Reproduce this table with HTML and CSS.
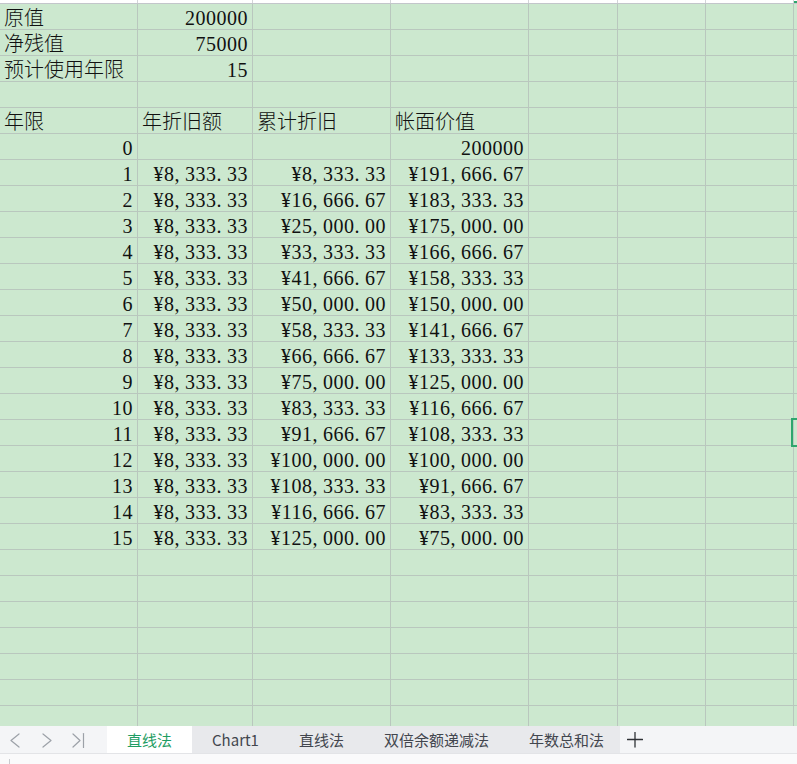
FILE: index.html
```html
<!DOCTYPE html>
<html lang="zh-CN">
<head>
<meta charset="utf-8">
<title>直线法</title>
<link rel="stylesheet" href="styles.css">
</head>
<body>
<div class="app">
  <div class="colhead"></div>
  <div class="sheet">
    <div class="row"><div class="c">原值</div><div class="c r">200000</div></div>
    <div class="row"><div class="c">净残值</div><div class="c r">75000</div></div>
    <div class="row"><div class="c">预计使用年限</div><div class="c r">15</div></div>
    <div class="row"></div>
    <div class="row"><div class="c">年限</div><div class="c">年折旧额</div><div class="c">累计折旧</div><div class="c">帐面价值</div></div>
    <div class="row"><div class="c r">0</div><div class="c"></div><div class="c"></div><div class="c r">200000</div></div>
    <div class="row"><div class="c r">1</div><div class="c r">¥8<i>,</i>333<i>.</i>33</div><div class="c r">¥8<i>,</i>333<i>.</i>33</div><div class="c r">¥191<i>,</i>666<i>.</i>67</div></div>
    <div class="row"><div class="c r">2</div><div class="c r">¥8<i>,</i>333<i>.</i>33</div><div class="c r">¥16<i>,</i>666<i>.</i>67</div><div class="c r">¥183<i>,</i>333<i>.</i>33</div></div>
    <div class="row"><div class="c r">3</div><div class="c r">¥8<i>,</i>333<i>.</i>33</div><div class="c r">¥25<i>,</i>000<i>.</i>00</div><div class="c r">¥175<i>,</i>000<i>.</i>00</div></div>
    <div class="row"><div class="c r">4</div><div class="c r">¥8<i>,</i>333<i>.</i>33</div><div class="c r">¥33<i>,</i>333<i>.</i>33</div><div class="c r">¥166<i>,</i>666<i>.</i>67</div></div>
    <div class="row"><div class="c r">5</div><div class="c r">¥8<i>,</i>333<i>.</i>33</div><div class="c r">¥41<i>,</i>666<i>.</i>67</div><div class="c r">¥158<i>,</i>333<i>.</i>33</div></div>
    <div class="row"><div class="c r">6</div><div class="c r">¥8<i>,</i>333<i>.</i>33</div><div class="c r">¥50<i>,</i>000<i>.</i>00</div><div class="c r">¥150<i>,</i>000<i>.</i>00</div></div>
    <div class="row"><div class="c r">7</div><div class="c r">¥8<i>,</i>333<i>.</i>33</div><div class="c r">¥58<i>,</i>333<i>.</i>33</div><div class="c r">¥141<i>,</i>666<i>.</i>67</div></div>
    <div class="row"><div class="c r">8</div><div class="c r">¥8<i>,</i>333<i>.</i>33</div><div class="c r">¥66<i>,</i>666<i>.</i>67</div><div class="c r">¥133<i>,</i>333<i>.</i>33</div></div>
    <div class="row"><div class="c r">9</div><div class="c r">¥8<i>,</i>333<i>.</i>33</div><div class="c r">¥75<i>,</i>000<i>.</i>00</div><div class="c r">¥125<i>,</i>000<i>.</i>00</div></div>
    <div class="row"><div class="c r">10</div><div class="c r">¥8<i>,</i>333<i>.</i>33</div><div class="c r">¥83<i>,</i>333<i>.</i>33</div><div class="c r">¥116<i>,</i>666<i>.</i>67</div></div>
    <div class="row"><div class="c r">11</div><div class="c r">¥8<i>,</i>333<i>.</i>33</div><div class="c r">¥91<i>,</i>666<i>.</i>67</div><div class="c r">¥108<i>,</i>333<i>.</i>33</div></div>
    <div class="row"><div class="c r">12</div><div class="c r">¥8<i>,</i>333<i>.</i>33</div><div class="c r">¥100<i>,</i>000<i>.</i>00</div><div class="c r">¥100<i>,</i>000<i>.</i>00</div></div>
    <div class="row"><div class="c r">13</div><div class="c r">¥8<i>,</i>333<i>.</i>33</div><div class="c r">¥108<i>,</i>333<i>.</i>33</div><div class="c r">¥91<i>,</i>666<i>.</i>67</div></div>
    <div class="row"><div class="c r">14</div><div class="c r">¥8<i>,</i>333<i>.</i>33</div><div class="c r">¥116<i>,</i>666<i>.</i>67</div><div class="c r">¥83<i>,</i>333<i>.</i>33</div></div>
    <div class="row"><div class="c r">15</div><div class="c r">¥8<i>,</i>333<i>.</i>33</div><div class="c r">¥125<i>,</i>000<i>.</i>00</div><div class="c r">¥75<i>,</i>000<i>.</i>00</div></div>
    <div class="sel"></div>
  </div>
  <div class="tabbar">
    <div class="nav">
      <svg width="107" height="27" viewBox="0 0 107 27" aria-hidden="true">
        <polyline points="19,8 11,14.5 19,21" />
        <polyline points="43,8 51,14.5 43,21" />
        <polyline points="73,8 80,14.5 73,21" />
        <line x1="83.5" y1="7.5" x2="83.5" y2="21.5" />
      </svg>
    </div>
    <div class="tabs">
      <div class="tab active">直线法</div>
      <div class="tab">Chart1</div>
      <div class="tab">直线法</div>
      <div class="tab">双倍余额递减法</div>
      <div class="tab last">年数总和法</div>
    </div>
    <div class="add">
      <svg width="16" height="16" viewBox="0 0 16 16" aria-hidden="true">
        <line x1="0.5" y1="7.5" x2="15.5" y2="7.5" />
        <line x1="8" y1="0.5" x2="8" y2="15" />
      </svg>
    </div>
  </div>
  <div class="status"></div>
</div>
</body>
</html>
```
FILE: styles.css
```css
* {
  box-sizing: border-box;
  margin: 0;
  padding: 0;
}

html,
body {
  width: 797px;
  height: 764px;
  overflow: hidden;
  background: #ffffff;
}

body {
  font-family: "Liberation Serif", "Noto Sans CJK SC", serif;
  color: #111111;
}

.app {
  display: flex;
  flex-direction: column;
  height: 764px;
}

.colhead {
  flex: 0 0 4px;
  background-color: #ffffff;
  border-bottom: 1px solid #c3c6cb;
  background-image:
    linear-gradient(#d3d5d8, #d3d5d8),
    linear-gradient(#d3d5d8, #d3d5d8),
    linear-gradient(#d3d5d8, #d3d5d8),
    linear-gradient(#d3d5d8, #d3d5d8),
    linear-gradient(#d3d5d8, #d3d5d8),
    linear-gradient(#d3d5d8, #d3d5d8),
    linear-gradient(#d3d5d8, #d3d5d8),
    linear-gradient(#2ea56d, #2ea56d);
  background-size: 1px 100%, 1px 100%, 1px 100%, 1px 100%, 1px 100%, 1px 100%, 1px 100%, 10px 2px;
  background-position: 137px 0, 252px 0, 390px 0, 528px 0, 617px 0, 705px 0, 793px 0, 794px 1px;
  background-repeat: no-repeat;
}

.sheet {
  flex: 0 0 722px;
  position: relative;
  overflow: hidden;
  background-color: #cce8cf;
  background-image:
    linear-gradient(#b9c7be, #b9c7be),
    linear-gradient(#b9c7be, #b9c7be),
    linear-gradient(#b9c7be, #b9c7be),
    linear-gradient(#b9c7be, #b9c7be),
    linear-gradient(#b9c7be, #b9c7be),
    linear-gradient(#b9c7be, #b9c7be),
    linear-gradient(#b9c7be, #b9c7be),
    repeating-linear-gradient(to bottom, transparent 0 25px, #b9c7be 25px 26px);
  background-size: 1px 100%, 1px 100%, 1px 100%, 1px 100%, 1px 100%, 1px 100%, 1px 100%, 100% 100%;
  background-position: 137px 0, 252px 0, 390px 0, 528px 0, 617px 0, 705px 0, 793px 0, 0 0;
  background-repeat: no-repeat;
}

.row {
  display: grid;
  grid-template-columns: 138px 115px 138px 138px;
  height: 26px;
}

.c {
  padding: 2px 5px 0 4px;
  height: 26px;
  line-height: 25px;
  font-size: 20px;
  font-weight: 300;
  white-space: nowrap;
}

.r {
  text-align: right;
  letter-spacing: 0.5px;
}

.c i {
  font-style: normal;
  display: inline-block;
  width: 10.5px;
  text-align: left;
}

.sel {
  position: absolute;
  left: 791px;
  top: 414px;
  width: 14px;
  height: 29px;
  border: 2px solid #2ea56d;
}

.tabbar {
  flex: 0 0 27px;
  display: flex;
  background: #f4f5f7;
  font-family: "Noto Sans CJK SC", sans-serif;
  font-size: 15px;
  color: #42464e;
}

.nav {
  width: 107px;
  display: flex;
}

.nav svg,
.add svg {
  fill: none;
  stroke-linecap: round;
  stroke-linejoin: round;
}

.nav svg {
  stroke: #9ca1a8;
  stroke-width: 1.2;
}

.tabs {
  display: flex;
  background: #e8e9ec;
}

.tab {
  display: flex;
  align-items: center;
  padding: 0 20px;
  white-space: nowrap;
}

.tab.last {
  padding-right: 16px;
}

.tab.active {
  background: #ffffff;
  color: #1f9d64;
}

.add {
  display: flex;
  align-items: flex-start;
  padding: 6px 0 0 7px;
}

.add svg {
  stroke: #2f3236;
  stroke-width: 1.3;
}

.status {
  flex: 1 1 auto;
  position: relative;
  background: #fafafb;
  border-top: 1px solid #e3e4e7;
}

.status::before {
  content: "";
  position: absolute;
  left: 9px;
  top: 5px;
  width: 1px;
  height: 6px;
  background: #c9cbcf;
}
```
